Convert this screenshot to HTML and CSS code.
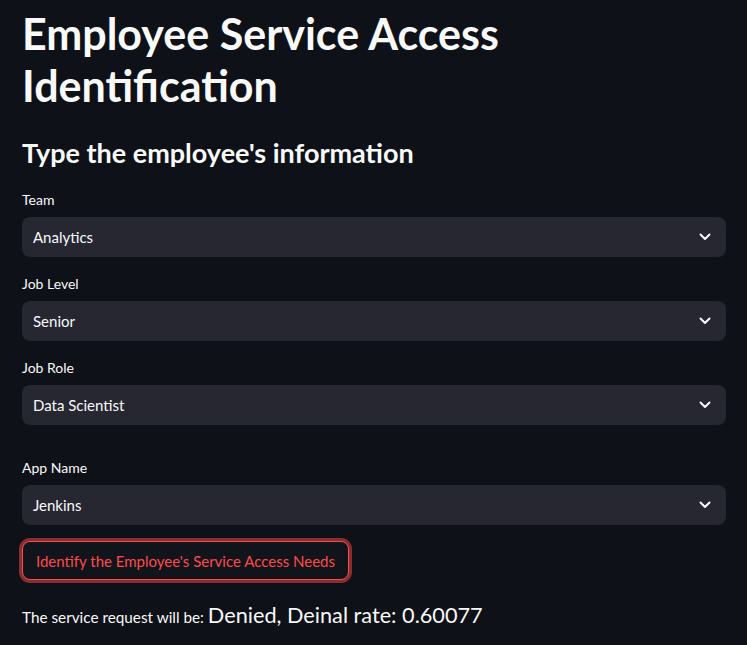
FILE: index.html
```html
<!DOCTYPE html>
<html lang="en">
<head>
<meta charset="utf-8">
<title>Employee Service Access Identification</title>
<link rel="stylesheet" href="styles.css">
</head>
<body>
<main class="app">
  <h1 class="title">Employee Service Access Identification</h1>
  <h3 class="subheader">Type the employee's information</h3>

  <div class="field">
    <label class="field-label">Team</label>
    <div class="select">
      <span class="select-value">Analytics</span>
      <svg class="chevron" viewBox="0 0 12 8" width="12" height="8"><polyline points="1.5,1.5 6,6 10.5,1.5" fill="none" stroke="currentColor" stroke-width="2" stroke-linecap="round" stroke-linejoin="round"/></svg>
    </div>
  </div>

  <div class="field">
    <label class="field-label">Job Level</label>
    <div class="select">
      <span class="select-value">Senior</span>
      <svg class="chevron" viewBox="0 0 12 8" width="12" height="8"><polyline points="1.5,1.5 6,6 10.5,1.5" fill="none" stroke="currentColor" stroke-width="2" stroke-linecap="round" stroke-linejoin="round"/></svg>
    </div>
  </div>

  <div class="field">
    <label class="field-label">Job Role</label>
    <div class="select">
      <span class="select-value">Data Scientist</span>
      <svg class="chevron" viewBox="0 0 12 8" width="12" height="8"><polyline points="1.5,1.5 6,6 10.5,1.5" fill="none" stroke="currentColor" stroke-width="2" stroke-linecap="round" stroke-linejoin="round"/></svg>
    </div>
  </div>

  <div class="spacer"></div>

  <div class="field">
    <label class="field-label">App Name</label>
    <div class="select">
      <span class="select-value">Jenkins</span>
      <svg class="chevron" viewBox="0 0 12 8" width="12" height="8"><polyline points="1.5,1.5 6,6 10.5,1.5" fill="none" stroke="currentColor" stroke-width="2" stroke-linecap="round" stroke-linejoin="round"/></svg>
    </div>
  </div>

  <div class="button-row">
    <button class="btn" type="button">Identify the Employee's Service Access Needs</button>
  </div>

  <p class="result">The service request will be: <span class="result-big">Denied, Deinal rate: 0.60077</span></p>
</main>
</body>
</html>
```

FILE: styles.css
```css
html, body {
  margin: 0;
  padding: 0;
  background: #0e1117;
  color: #fafafa;
  font-family: Lato, "Source Sans Pro", "Noto Sans", sans-serif;
}

.app {
  width: 704px;
  padding: 8px 21px 0 22px;
  display: flex;
  flex-direction: column;
}

.title {
  margin: 0;
  font-size: 43px;
  line-height: 51.5px;
  font-weight: 700;
}

.subheader {
  margin: 24px 0 18px 0;
  font-size: 27px;
  line-height: 36px;
  font-weight: 700;
}

.field {
  display: flex;
  flex-direction: column;
  margin-bottom: 16px;
}

.field-label {
  font-size: 14px;
  line-height: 22px;
  margin-bottom: 6px;
}

.select {
  height: 40px;
  box-sizing: border-box;
  background: #262730;
  border-radius: 8px;
  display: flex;
  align-items: center;
  justify-content: space-between;
  padding: 0 15px 0 11px;
}

.select-value {
  font-size: 15px;
  line-height: 20px;
}

.chevron {
  color: #fafafa;
}

.spacer {
  height: 16px;
}

.button-row {
  display: flex;
  margin-bottom: 16px;
}

.btn {
  font-family: inherit;
  font-size: 15px;
  height: 39px;
  padding: 0 13px;
  background: #11141b;
  color: #ff4b4b;
  border: 1px solid #ff4b4b;
  border-radius: 8px;
  box-shadow: 0 0 0 3px rgba(255, 75, 75, 0.5);
}

.result {
  margin: 4px 0 0 0;
  font-size: 15.3px;
  line-height: 30px;
}

.result-big {
  font-size: 21.7px;
}
```
